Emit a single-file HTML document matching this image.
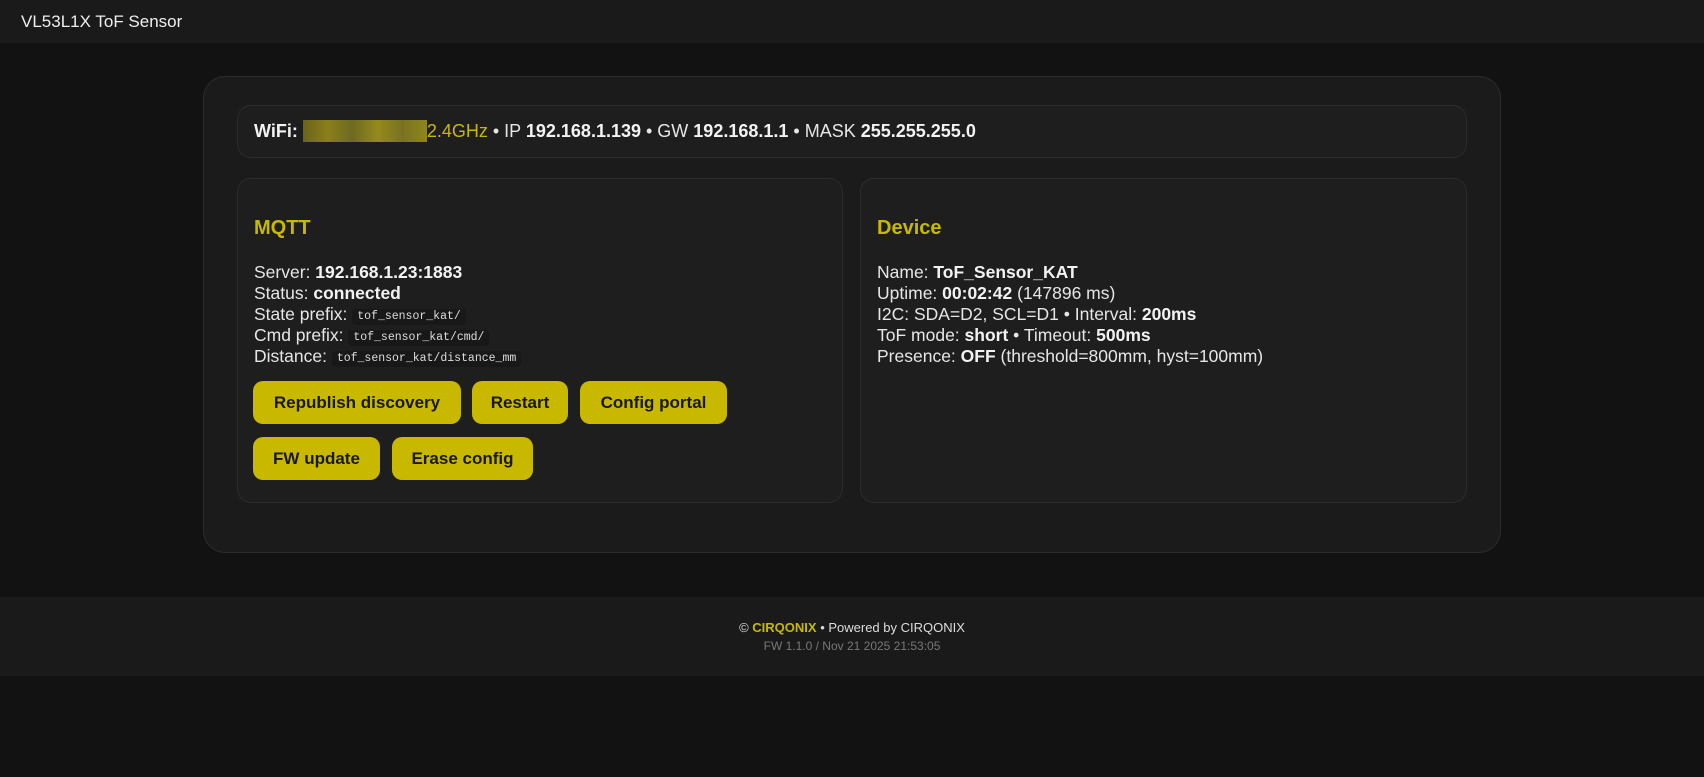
<!DOCTYPE html>
<html><head><meta charset="utf-8"><style>
*{box-sizing:border-box;margin:0;padding:0}
body{width:1704px;height:777px;background:#121212;font-family:"Liberation Sans",sans-serif;color:#e6e6e6;position:relative;overflow:hidden}
.hdr{position:absolute;left:0;top:0;width:1704px;height:43px;background:#1a1a1a;font-size:17px;line-height:43px;padding-left:21px;color:#eee}
.outer{position:absolute;left:203px;top:76px;width:1298px;height:477px;background:#1b1b1b;border:1px solid #2c2c2c;border-radius:22px}
.wifi{position:absolute;left:237px;top:105px;width:1230px;height:53px;background:#1e1e1e;border:1px solid #2c2c2c;border-radius:14px;font-size:18px;line-height:51px;padding-left:16px;white-space:nowrap}
.card{position:absolute;top:178px;height:325px;background:#1e1e1e;border:1px solid #2c2c2c;border-radius:14px;padding-left:16px}
h2{position:absolute;left:16px;top:38px;font-size:20px;color:#c8b900;font-weight:bold}
.lines{position:absolute;left:16px;top:83px;font-size:17.5px;line-height:21px;white-space:nowrap}
b{color:#f2f2f2}
code{font-family:"Liberation Mono",monospace;font-size:11.5px;background:#181818;padding:1px 5px;border-radius:4px;color:#ddd;line-height:14px;display:inline-block;vertical-align:1px}
.btn{position:absolute;height:43px;background:#c8b900;color:#181818;border-radius:10px;font-size:17px;font-weight:bold;line-height:43px;text-align:center}
.y{color:#c8b900}
.foot{position:absolute;left:0;top:597px;width:1704px;height:79px;background:#1a1a1a;text-align:center}
</style></head><body>
<div class="hdr">VL53L1X ToF Sensor</div>
<div class="outer"></div>
<div class="wifi"><b>WiFi:</b> <span style="display:inline-block;width:124px;height:22px;vertical-align:-5px;background:linear-gradient(90deg,#6b6418,#8a7f1a 20%,#6e6a20 40%,#958a1c 60%,#7a7220 80%,#8e861c)"></span><span class="y">2.4GHz</span> • IP <b>192.168.1.139</b> • GW <b>192.168.1.1</b> • MASK <b>255.255.255.0</b></div>
<div class="card" style="left:237px;width:606px">
<h2>MQTT</h2>
<div class="lines">Server: <b>192.168.1.23:1883</b><br>Status: <b>connected</b><br>State prefix: <code>tof_sensor_kat/</code><br>Cmd prefix: <code>tof_sensor_kat/cmd/</code><br>Distance: <code>tof_sensor_kat/distance_mm</code></div>
</div>
<div class="btn" style="left:253px;top:381px;width:208px">Republish discovery</div>
<div class="btn" style="left:472px;top:381px;width:96px">Restart</div>
<div class="btn" style="left:580px;top:381px;width:147px">Config portal</div>
<div class="btn" style="left:253px;top:437px;width:127px">FW update</div>
<div class="btn" style="left:392px;top:437px;width:141px">Erase config</div>
<div class="card" style="left:860px;width:607px">
<h2>Device</h2>
<div class="lines">Name: <b>ToF_Sensor_KAT</b><br>Uptime: <b>00:02:42</b> (147896 ms)<br>I2C: SDA=D2, SCL=D1 • Interval: <b>200ms</b><br>ToF mode: <b>short</b> • Timeout: <b>500ms</b><br>Presence: <b>OFF</b> (threshold=800mm, hyst=100mm)</div>
</div>
<div class="foot">
<div style="font-size:13px;margin-top:23px;color:#ddd">© <b class="y">CIRQONIX</b> • Powered by CIRQONIX</div>
<div style="font-size:12px;margin-top:4px;color:#777">FW 1.1.0 / Nov 21 2025 21:53:05</div>
</div>
</body></html>
